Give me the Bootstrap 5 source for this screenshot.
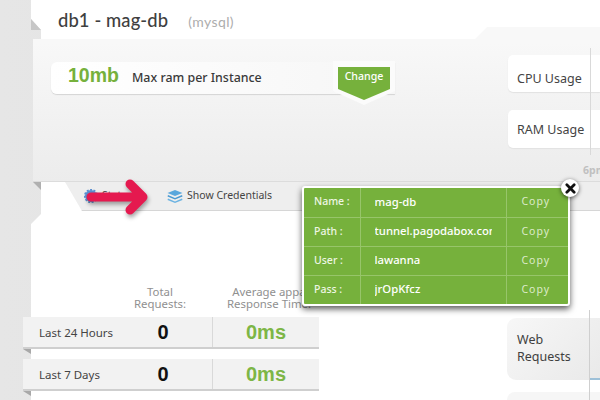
<!DOCTYPE html>
<html lang="en">
<head>
<meta charset="utf-8">
<title>db1 - mag-db</title>
<link href="https://cdn.jsdelivr.net/npm/bootstrap@5.3.0/dist/css/bootstrap.min.css" rel="stylesheet">
<style>
html,body{height:400px;overflow:hidden}
body{background:linear-gradient(90deg,#e6e6e6,#dedede);font-family:"Noto Sans","Liberation Sans",sans-serif;color:#3d3d3d}
.sheet{position:relative;margin-left:31px;height:400px}
.sheet::before{content:"";position:absolute;inset:0;background:#fff;clip-path:polygon(0 0,100% 0,100% 100%,0 100%,0 224px,10px 214px,10px 30px,0 19px)}
.sheet>*{position:relative}
.topfold{position:absolute!important;left:0;top:19px;width:10px;height:11px;background:#c6c6c6;clip-path:polygon(0 0,100% 100%,0 100%)}
.hdr{height:27px;padding-left:27px;line-height:40px;white-space:nowrap;z-index:2}
.ttl{font-family:Lato,sans-serif;font-size:18.4px;font-weight:500;color:#3f3f3f;letter-spacing:.1px}
.sub{font-family:Lato,sans-serif;font-size:14px;color:#adadad;margin-left:20px;letter-spacing:.4px}
.panel{margin-left:2px;height:155px;background:linear-gradient(#f8f8f8 10%,#ececec);clip-path:polygon(0 12px,442px 12px,454px 0,100% 0,100% 100%,0 100%);border-bottom:1px solid #dcdcdc}
.ram{margin:35px 0 0 18px;width:344px;height:32px;background:linear-gradient(90deg,#fff,#f6f6f6);border-radius:6px 0 0 6px;box-shadow:0 1px 1px #d4d4d4}
.ramv{font-size:19.5px;font-weight:700;color:#76b13c;margin:-4px 0 0 17px;width:64px;font-family:"Liberation Sans",sans-serif}
.raml{font-size:12.4px;color:#3a3a3a;font-weight:500;flex:1}
.chgo{width:62px;height:44px;margin-top:-1px;background:#fbfbfb;clip-path:polygon(0 0,100% 0,100% 30px,50% 100%,0 30px)}
.chgi{width:52px;height:33px;margin:6px 5px;background:#76b13c;clip-path:polygon(0 0,100% 0,100% 22px,50% 100%,0 22px);color:#fff;font-size:10.6px;font-weight:500;text-align:center;line-height:18px}
.metrics{width:92px;margin:28px 0 0 auto;position:relative}
.metrics::after,.reqs::after{content:"";position:absolute;left:82px;width:1px;background:#d9d9d9}
.metrics::after{top:-7px;height:107px}
.mcard{background:#fff;border-radius:5px 0 0 5px;font-size:12.5px;color:#444;padding-left:9px;height:37px;box-shadow:0 1px 1px #e2e2e2}
.mcard.cpu{padding-bottom:3px}
.mcard+.mcard{margin-top:18px;height:38px;padding-top:3px}
.tm{position:absolute;left:550px;top:136px;font-size:10.5px;font-weight:700;color:#c0c0c0}
.bar{position:relative;height:29px;margin-left:34px;background:#eeeeee;border-bottom:1px solid #d6d6d6;clip-path:polygon(0 0,100% 0,100% 100%,17px 100%);font-size:10.5px;color:#444}
.tab1{margin-left:19px;width:83px}
.fold2{position:absolute!important;left:2px;top:182px;width:8px;height:8px;background:#b0b0b0;clip-path:polygon(0 0,100% 0,100% 100%)}
.flowstats{margin-top:78px}
.tbl{width:296px;margin-left:-8px}
.heads{display:grid;grid-template-columns:100px 74px 122px;font-size:11.4px;line-height:12px;color:#909090;text-align:center;height:28px;white-space:nowrap;position:relative;top:-3px}
.heads div:nth-child(3){padding-left:22px}
.srow{position:relative;display:grid;grid-template-columns:189px 107px;height:32px;margin-bottom:10px;background:#f2f2f2;border-bottom:2px solid #cfcfcf;align-items:center;font-size:11.5px;color:#444}
.srow:last-child{margin-bottom:0}
.srow::after{content:"";position:absolute;left:0;top:32px;width:8px;height:5px;background:#a8a8a8;clip-path:polygon(0 0,100% 0,100% 100%)}
.lab{display:flex;align-items:center;padding:1px 0 0 16px;height:100%}
.lab span{width:104px}
.zero{font:700 20px "Liberation Sans",sans-serif;color:#111;width:40px;text-align:center}
.ms{font:700 20px "Liberation Sans",sans-serif;color:#7db646;text-align:center;border-left:1px solid #d9d9d9;height:100%;line-height:30px}
.reqs{position:relative;width:93px;margin-left:auto;margin-top:29px}
.reqs::after{top:-8px;height:90px;background:#cfcfcf}
.rcard{height:62px;margin-bottom:12px;border-radius:9px 0 0 9px;background:linear-gradient(135deg,#f7f7f7,#e9e9e9);padding:13px 0 0 10px;font-size:12.5px;line-height:17px;color:#3f3f3f}
.rcard+.rcard{background:#f6f6f6;height:8px;margin-bottom:0;padding:0;border-radius:9px 0 0 0}
.tick{position:absolute;left:83px;top:60px;width:10px;height:2px;background:#9dc0d8;z-index:1}
.creds{position:absolute;left:302px;top:186px;width:268px;height:120px;background:#76b13c;border:2px solid #fff;border-radius:3px;box-shadow:0 3px 6px rgba(0,0,0,.65);z-index:5}
.ctab{table-layout:fixed;width:100%;height:100%;--bs-table-bg:transparent;--bs-table-color:#fff;--bs-table-border-color:#97c56a;margin:0;font-size:11.3px}
.ctab td{padding:0;vertical-align:middle;border-bottom:1px solid #97c56a;height:29px;color:#fff}
.ctab tr:last-child td{border-bottom:0}
.ctab td+td{border-left:1px solid #97c56a}
.c1{padding-left:10px!important;font-size:10.5px;font-weight:500;color:#eef6e4!important}
.c2{font-weight:500}
.c2 div{width:117px;margin-left:14px;overflow:hidden;white-space:nowrap}
.c3{font-size:10.5px;letter-spacing:1px;text-align:center;padding-right:3px!important;color:#dcebc9!important}
.xbtn{position:absolute;left:561px;top:179px;width:18px;height:18px;border-radius:50%;background:#fff;box-shadow:0 1px 4px rgba(0,0,0,.6);z-index:6;display:flex;align-items:center;justify-content:center}
.arrow{position:absolute;left:83px;top:176px;z-index:4;filter:drop-shadow(1px 3px 2px rgba(0,0,0,.35))}
</style>
</head>
<body>
<div class="sheet">
  <div class="topfold"></div>
  <div class="hdr"><span class="ttl">db1 - mag-db</span><span class="sub">(mysql)</span></div>
  <div class="panel d-flex">
    <div class="ram d-flex align-items-center flex-shrink-0">
      <span class="ramv">10mb</span>
      <span class="raml">Max ram per Instance</span>
      <div class="chgo align-self-start flex-shrink-0"><div class="chgi">Change</div></div>
    </div>
    <div class="metrics flex-shrink-0">
      <div class="mcard cpu d-flex align-items-end">CPU Usage</div>
      <div class="mcard d-flex align-items-center">RAM Usage</div>
    </div>
    <span class="tm">6pm</span>
  </div>
  <div class="bar d-flex align-items-center">
    <div class="tab1 d-flex align-items-center gap-1">
      <svg width="14" height="14" viewBox="0 0 14 14" aria-hidden="true"><circle cx="7" cy="7" r="4.5" fill="none" stroke="#5b8fd0" stroke-width="3"/><circle cx="7" cy="7" r="6.3" fill="none" stroke="#5b8fd0" stroke-width="1.6" stroke-dasharray="2 1.5"/></svg>
      <span>Stats</span>
    </div>
    <div class="d-flex align-items-center gap-1">
      <svg width="16" height="13" viewBox="0 0 16 13" aria-hidden="true"><path d="M8 0 15.5 3 8 6 .5 3Z" fill="#5aa7dc"/><path d="M1 5 8 8 15 5 15.5 6.5 8 9.5 .5 6.5Z" fill="#4b9ad2"/><path d="M1 8.5 8 11.5 15 8.5 15.5 10 8 13 .5 10Z" fill="#6cb3e2"/></svg>
      <span>Show Credentials</span>
    </div>
  </div>
  <div class="fold2"></div>
  <div class="d-flex flowstats">
    <div class="tbl flex-shrink-0">
      <div class="heads"><div></div><div>Total<br>Requests:</div><div>Average appa<br>Response Time:</div></div>
      <div class="srow"><div class="lab"><span>Last 24 Hours</span><b class="zero">0</b></div><div class="ms">0ms</div></div>
      <div class="srow"><div class="lab"><span>Last 7 Days</span><b class="zero">0</b></div><div class="ms">0ms</div></div>
    </div>
    <div class="reqs flex-shrink-0">
      <div class="tick"></div>
      <div class="rcard">Web<br>Requests</div>
      <div class="rcard"></div>
    </div>
  </div>
</div>
<svg class="arrow" width="68" height="42" viewBox="0 0 68 42" aria-hidden="true"><path d="M8 21H60M47 8 60 21 47 34" fill="none" stroke="#e5194f" stroke-width="9" stroke-linecap="round" stroke-linejoin="round"/></svg>
<div class="creds">
  <table class="table ctab">
    <colgroup><col style="width:56px"><col style="width:146px"><col></colgroup>
    <tbody>
    <tr><td class="c1">Name :</td><td class="c2"><div>mag-db</div></td><td class="c3">Copy</td></tr>
    <tr><td class="c1">Path :</td><td class="c2"><div>tunnel.pagodabox.com</div></td><td class="c3">Copy</td></tr>
    <tr><td class="c1">User :</td><td class="c2"><div>lawanna</div></td><td class="c3">Copy</td></tr>
    <tr><td class="c1">Pass :</td><td class="c2"><div>jrOpKfcz</div></td><td class="c3">Copy</td></tr>
    </tbody>
  </table>
</div>
<div class="xbtn"><svg width="11" height="11" viewBox="0 0 12 12" aria-hidden="true"><path d="M2 2 10 10M10 2 2 10" stroke="#111" stroke-width="3" stroke-linecap="round"/></svg></div>
</body>
</html>
